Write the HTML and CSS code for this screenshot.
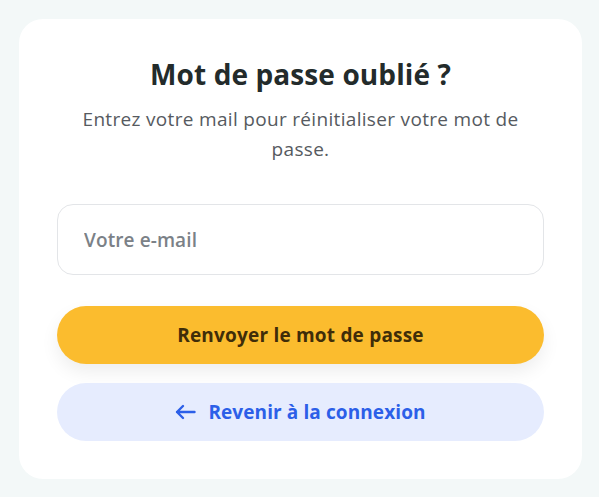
FILE: index.html
```html
<!DOCTYPE html>
<html lang="fr">
<head>
<meta charset="utf-8">
<title>Mot de passe oublié</title>
<link rel="stylesheet" href="styles.css">
</head>
<body>
<main class="card">
  <h1 class="title">Mot de passe oublié ?</h1>
  <p class="subtitle">Entrez votre mail pour réinitialiser votre mot de passe.</p>
  <form class="form">
    <input class="field" type="email" placeholder="Votre e-mail">
    <button class="btn btn-primary" type="button">Renvoyer le mot de passe</button>
    <button class="btn btn-secondary" type="button">
      <svg class="arrow" width="21" height="16" viewBox="0 0 21 16" fill="none" stroke="currentColor" stroke-width="2.4" stroke-linecap="round" stroke-linejoin="round"><path d="M19.5 8H2M8 2L2 8l6 6"/></svg>
      <span>Revenir à la connexion</span>
    </button>
  </form>
</main>
</body>
</html>
```
FILE: styles.css
```css
html, body {
  margin: 0;
  padding: 0;
  background: #f3f8f8;
  font-family: "Open Sans", "Noto Sans", sans-serif;
}
body {
  padding: 19px 17px 18px 19px;
}
.card {
  width: 563px;
  height: 460px;
  box-sizing: border-box;
  background: #ffffff;
  border-radius: 24px;
  padding: 37px 38px 38px;
}
.title {
  margin: 0;
  text-align: center;
  font-size: 28px;
  line-height: 36px;
  font-weight: 700;
  letter-spacing: 0.1px;
  color: #232b2b;
}
.subtitle {
  margin: 12px 0 0;
  padding: 0 12px;
  text-align: center;
  font-size: 19px;
  line-height: 30px;
  letter-spacing: 0.32px;
  color: #565a60;
}
.form {
  margin-top: 40px;
  display: flex;
  flex-direction: column;
}
.field {
  height: 71px;
  box-sizing: border-box;
  border: 1px solid #e3e5e8;
  border-radius: 16px;
  padding: 0 26px;
  font-family: inherit;
  font-size: 19px;
  font-weight: 600;
  letter-spacing: 0.1px;
  color: #333;
  outline: none;
  background: #fff;
}
.field::placeholder {
  color: #7b8187;
}
.btn {
  height: 58px;
  border: none;
  border-radius: 29px;
  font-family: inherit;
  font-size: 19px;
  font-weight: 700;
  display: flex;
  align-items: center;
  justify-content: center;
  gap: 12px;
  cursor: pointer;
}
.btn-primary {
  margin-top: 31px;
  background: #fbbc2e;
  color: #3f2d09;
  letter-spacing: 0.2px;
  box-shadow: 0 8px 18px rgba(0, 0, 0, 0.07);
}
.btn-secondary {
  margin-top: 19px;
  background: #e6ecfe;
  color: #2c5fe8;
  letter-spacing: 0.1px;
}
.arrow {
  display: block;
}
```
